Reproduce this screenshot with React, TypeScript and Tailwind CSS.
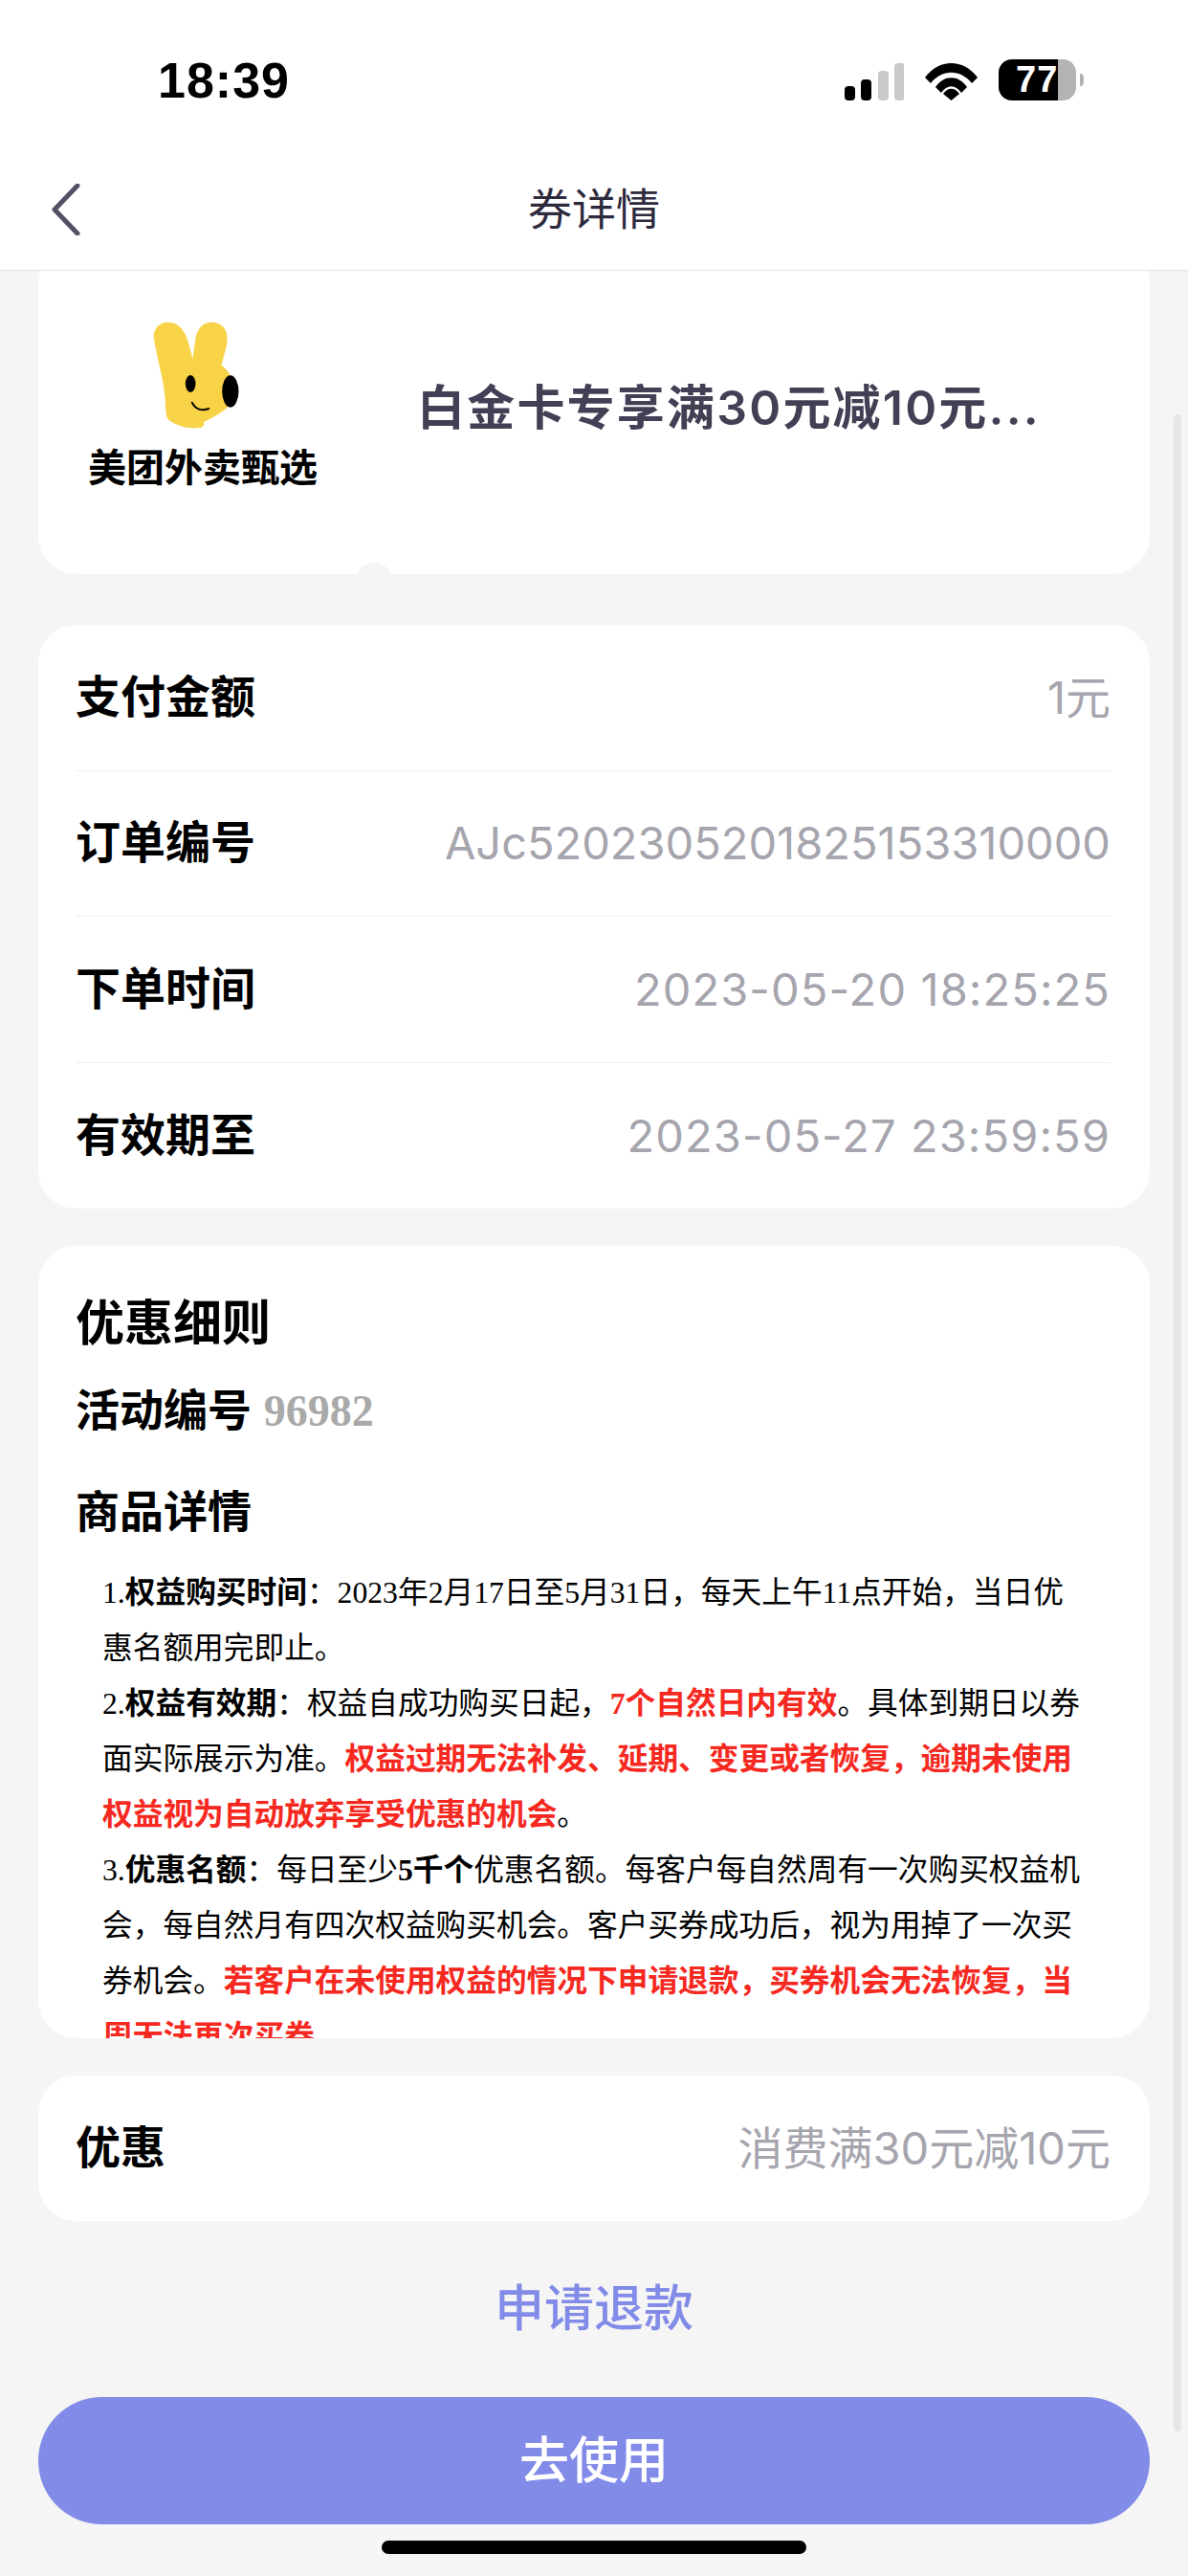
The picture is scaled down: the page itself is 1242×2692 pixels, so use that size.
import React from 'react';

const sans = 'font-["Liberation_Sans","Noto_Sans_CJK_SC",sans-serif]';
const valueText = 'font-["Inter","Noto_Sans_CJK_SC",sans-serif] text-[47px] text-[#a6a5ae]';

const InfoRow = ({ label, value, wide, last }: { label: string; value: string; wide?: boolean; last?: boolean }) => (
  <div className={`flex h-[152.5px] items-center justify-between ${last ? '' : 'border-b border-[#efefef]'}`}>
    <span className="text-[47px] font-bold text-black">{label}</span>
    <span className={`${valueText} ${wide ? 'tracking-[1.1px]' : ''}`}>{value}</span>
  </div>
);

const Red = ({ children }: { children: React.ReactNode }) => (
  <strong className="font-bold text-[#f5291f]">{children}</strong>
);

const Rabbit = () => (
  <svg width="92" height="114" viewBox="270 50 275 342" className="mr-[14px]">
    <path
      d="M320 55C290 55 272 78 275 105C285 170 305 230 310 290C312 320 312 345 318 358C340 378 385 392 420 386C432 384 434 375 432 368C470 350 505 330 525 300L530 270C525 235 510 205 487 190C495 160 505 130 505 105C505 75 485 55 455 55C425 55 410 80 405 110L397 170L385 125C375 85 355 55 320 55Z"
      fill="#f8d247"
    />
    <ellipse cx="390" cy="248" rx="16" ry="27" fill="#000" />
    <ellipse cx="515" cy="272" rx="26" ry="50" fill="#000" />
    <path d="M395 307C405 328 425 335 447 326" fill="none" stroke="#000" strokeWidth="6" strokeLinecap="round" />
  </svg>
);

export default function App() {
  return (
    <div className={`relative flex h-[2692px] w-[1242px] flex-col overflow-hidden bg-[#f5f5f5] ${sans}`}>
      {/* Header */}
      <header className="relative z-10 h-[283px] shrink-0 border-b border-[#e3e3e3] bg-white">
        <div className="flex h-[137px] items-start justify-between pl-[165px] pr-[109px] pt-[62px]">
          <span className="text-[52px] font-bold leading-[44px] tracking-[1px] text-black">18:39</span>
          <div className="flex items-end gap-[22px]">
            <svg width="62" height="39" viewBox="0 0 62 39">
              <rect x="0" y="24" width="11" height="15" rx="4" fill="#000" />
              <rect x="17" y="17" width="11" height="22" rx="4" fill="#000" />
              <rect x="35" y="8" width="11" height="31" rx="4" fill="#c9c9c9" />
              <rect x="52" y="0" width="11" height="39" rx="4" fill="#c9c9c9" />
            </svg>
            <svg width="55" height="40" viewBox="0 0 55 40">
              <path d="M0 16C15 -4 40 -4 55 16L49 22C37 7 18 7 6 22Z" fill="#000" />
              <path d="M11 26C20 13 35 13 44 26L38 32C32 23 23 23 17 32Z" fill="#000" />
              <path d="M19 33C24 26 31 26 36 33L27.500 40Z" fill="#000" />
            </svg>
            <div className="flex items-center gap-[4px]">
              <div className="relative flex h-[43px] w-[81px] overflow-hidden rounded-[14px]">
                <div className="w-[62px] bg-black" />
                <div className="flex-1 bg-[#b3b3b3]" />
                <span className="absolute left-[18px] top-0 text-[38px] font-bold leading-[43px] tracking-[1px] text-white">77</span>
              </div>
              <div className="h-[13px] w-[4px] rounded-r-full bg-[#b3b3b3]" />
            </div>
          </div>
        </div>
        <div className="relative flex h-[145px] items-center justify-center pt-[20px]">
          <svg width="30" height="54" viewBox="0 0 30 54" className="absolute left-[54px] top-[55px]" fill="none" stroke="#544e66" strokeWidth="5" strokeLinecap="round" strokeLinejoin="round">
            <path d="M27 2L3 27L27 52" />
          </svg>
          <h1 className="text-[46px] font-normal text-[#2e2a3d]">券详情</h1>
        </div>
      </header>

      {/* Cards */}
      <main className="flex flex-1 flex-col px-[40px]">
        <section className="relative -mt-[28px] flex h-[345px] shrink-0 items-center rounded-[40px] bg-white pl-[55px]">
          <div className="mb-[10px] flex w-[234px] shrink-0 flex-col items-center">
            <Rabbit />
            <span className="mt-[18px] whitespace-nowrap text-[40px] font-bold leading-[44px] text-black">美团外卖甄选</span>
          </div>
          <h2 className='ml-[107px] -mt-[3px] whitespace-nowrap font-["Inter","Noto_Sans_CJK_SC",sans-serif] text-[50px] font-semibold tracking-[2.2px] text-[#453f55]'>白金卡专享满30元减10元...</h2>
          <div className="absolute bottom-[-26px] left-[332px] h-[38px] w-[38px] rounded-full bg-[#f5f5f5]" />
        </section>

        <section className="mt-[53px] shrink-0 rounded-[40px] bg-white pl-[39px] pr-[41px]">
          <InfoRow label="支付金额" value="1元" />
          <InfoRow label="订单编号" value="AJc5202305201825153310000" />
          <InfoRow label="下单时间" value="2023-05-20 18:25:25" wide />
          <InfoRow label="有效期至" value="2023-05-27 23:59:59" wide last />
        </section>

        <section className="mt-[39px] h-[828px] shrink-0 overflow-hidden rounded-[40px] bg-white pl-[39px] pt-[46px]">
          <h3 className="text-[51px] font-bold leading-[72px] text-black">优惠细则</h3>
          <p className="mt-[18px] text-[46px] font-bold leading-[72px] text-black">
            活动编号 <span className="font-['Liberation_Serif'] text-[#a9a9a9]">96982</span>
          </p>
          <h3 className="mt-[33px] text-[46px] font-bold leading-[72px] text-black">商品详情</h3>
          <div className="mt-[20px] w-[1060px] pl-[28px] font-['Liberation_Serif','Noto_Sans_CJK_SC',serif] text-[31.7px] leading-[58px] text-black">
            <p>1.<strong>权益购买时间</strong>：2023年2月17日至5月31日，每天上午11点开始，当日优惠名额用完即止。</p>
            <p>2.<strong>权益有效期</strong>：权益自成功购买日起，<Red>7个自然日内有效</Red>。具体到期日以券面实际展示为准。<Red>权益过期无法补发、延期、变更或者恢复，逾期未使用权益视为自动放弃享受优惠的机会</Red>。</p>
            <p>3.<strong>优惠名额</strong>：每日至少<strong>5千个</strong>优惠名额。每客户每自然周有一次购买权益机会，每自然月有四次权益购买机会。客户买券成功后，视为用掉了一次买券机会。<Red>若客户在未使用权益的情况下申请退款，买券机会无法恢复，当周无法再次买券</Red>。</p>
          </div>
        </section>

        <section className="mt-[39px] flex h-[152px] shrink-0 items-center justify-between rounded-[40px] bg-white pl-[39px] pr-[41px]">
          <span className="text-[47px] font-bold text-black">优惠</span>
          <span className={valueText}>消费满30元减10元</span>
        </section>

        <button className="mt-[54px] shrink-0 text-center text-[52px] font-medium leading-[76px] text-[#828ce8]">申请退款</button>

        <button className="mt-[54px] h-[133px] w-full shrink-0 rounded-full bg-[#828ce8] text-[52px] font-medium text-white">去使用</button>

        <div className="mx-auto mt-[17px] h-[14px] w-[444px] rounded-full bg-black" />
      </main>

      {/* scroll indicator */}
      <div className="absolute left-[1227px] top-[433px] h-[2108px] w-[8px] rounded-full bg-[#e6e6e6]" />
    </div>
  );
}
